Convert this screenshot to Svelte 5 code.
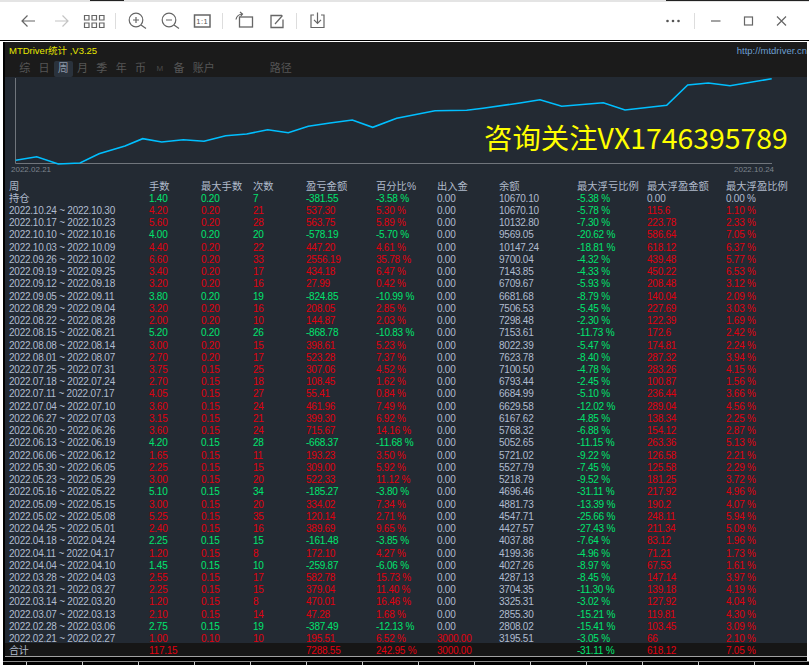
<script lang="ts">
  const columns = ['周', '手数', '最大手数', '次数', '盈亏金额', '百分比%', '出入金', '余额', '最大浮亏比例', '最大浮盈金额', '最大浮盈比例'];

  const raw = `持仓|1.40|0.20|7|-381.55|-3.58 %|0.00|10670.10|-5.38 %|0.00|0.00 %
2022.10.24 ~ 2022.10.30|4.20|0.20|21|537.30|5.30 %|0.00|10670.10|-5.78 %|115.6|1.10 %
2022.10.17 ~ 2022.10.23|5.60|0.20|28|563.75|5.89 %|0.00|10132.80|-7.30 %|223.78|2.33 %
2022.10.10 ~ 2022.10.16|4.00|0.20|20|-578.19|-5.70 %|0.00|9569.05|-20.62 %|586.64|7.05 %
2022.10.03 ~ 2022.10.09|4.40|0.20|22|447.20|4.61 %|0.00|10147.24|-18.81 %|618.12|6.37 %
2022.09.26 ~ 2022.10.02|6.60|0.20|33|2556.19|35.78 %|0.00|9700.04|-4.32 %|439.48|5.77 %
2022.09.19 ~ 2022.09.25|3.40|0.20|17|434.18|6.47 %|0.00|7143.85|-4.33 %|450.22|6.53 %
2022.09.12 ~ 2022.09.18|3.20|0.20|16|27.99|0.42 %|0.00|6709.67|-5.93 %|208.48|3.12 %
2022.09.05 ~ 2022.09.11|3.80|0.20|19|-824.85|-10.99 %|0.00|6681.68|-8.79 %|140.04|2.09 %
2022.08.29 ~ 2022.09.04|3.20|0.20|16|208.05|2.85 %|0.00|7506.53|-5.45 %|227.69|3.03 %
2022.08.22 ~ 2022.08.28|2.00|0.20|10|144.87|2.03 %|0.00|7298.48|-2.30 %|122.39|1.69 %
2022.08.15 ~ 2022.08.21|5.20|0.20|26|-868.78|-10.83 %|0.00|7153.61|-11.73 %|172.6|2.42 %
2022.08.08 ~ 2022.08.14|3.00|0.20|15|398.61|5.23 %|0.00|8022.39|-5.47 %|174.81|2.24 %
2022.08.01 ~ 2022.08.07|2.70|0.20|17|523.28|7.37 %|0.00|7623.78|-8.40 %|287.32|3.94 %
2022.07.25 ~ 2022.07.31|3.75|0.15|25|307.06|4.52 %|0.00|7100.50|-4.78 %|283.26|4.15 %
2022.07.18 ~ 2022.07.24|2.70|0.15|18|108.45|1.62 %|0.00|6793.44|-2.45 %|100.87|1.56 %
2022.07.11 ~ 2022.07.17|4.05|0.15|27|55.41|0.84 %|0.00|6684.99|-5.10 %|236.44|3.66 %
2022.07.04 ~ 2022.07.10|3.60|0.15|24|461.96|7.49 %|0.00|6629.58|-12.02 %|289.04|4.56 %
2022.06.27 ~ 2022.07.03|3.15|0.15|21|399.30|6.92 %|0.00|6167.62|-4.85 %|138.34|2.25 %
2022.06.20 ~ 2022.06.26|3.60|0.15|24|715.67|14.16 %|0.00|5768.32|-6.88 %|154.12|2.87 %
2022.06.13 ~ 2022.06.19|4.20|0.15|28|-668.37|-11.68 %|0.00|5052.65|-11.15 %|263.36|5.13 %
2022.06.06 ~ 2022.06.12|1.65|0.15|11|193.23|3.50 %|0.00|5721.02|-9.22 %|126.58|2.21 %
2022.05.30 ~ 2022.06.05|2.25|0.15|15|309.00|5.92 %|0.00|5527.79|-7.45 %|125.58|2.29 %
2022.05.23 ~ 2022.05.29|3.00|0.15|20|522.33|11.12 %|0.00|5218.79|-9.52 %|181.25|3.72 %
2022.05.16 ~ 2022.05.22|5.10|0.15|34|-185.27|-3.80 %|0.00|4696.46|-31.11 %|217.92|4.96 %
2022.05.09 ~ 2022.05.15|3.00|0.15|20|334.02|7.34 %|0.00|4881.73|-13.39 %|190.2|4.07 %
2022.05.02 ~ 2022.05.08|5.25|0.15|35|120.14|2.71 %|0.00|4547.71|-25.66 %|248.11|5.94 %
2022.04.25 ~ 2022.05.01|2.40|0.15|16|389.69|9.65 %|0.00|4427.57|-27.43 %|211.34|5.09 %
2022.04.18 ~ 2022.04.24|2.25|0.15|15|-161.48|-3.85 %|0.00|4037.88|-7.64 %|83.12|1.96 %
2022.04.11 ~ 2022.04.17|1.20|0.15|8|172.10|4.27 %|0.00|4199.36|-4.96 %|71.21|1.73 %
2022.04.04 ~ 2022.04.10|1.45|0.15|10|-259.87|-6.06 %|0.00|4027.26|-8.97 %|67.53|1.61 %
2022.03.28 ~ 2022.04.03|2.55|0.15|17|582.78|15.73 %|0.00|4287.13|-8.45 %|147.14|3.97 %
2022.03.21 ~ 2022.03.27|2.25|0.15|15|379.04|11.40 %|0.00|3704.35|-11.30 %|139.18|4.19 %
2022.03.14 ~ 2022.03.20|1.20|0.15|8|470.01|16.46 %|0.00|3325.31|-3.02 %|127.92|4.04 %
2022.03.07 ~ 2022.03.13|2.10|0.15|14|47.28|1.68 %|0.00|2855.30|-15.21 %|119.81|4.30 %
2022.02.28 ~ 2022.03.06|2.75|0.15|19|-387.49|-12.13 %|0.00|2808.02|-15.41 %|103.45|3.09 %
2022.02.21 ~ 2022.02.27|1.00|0.10|10|195.51|6.52 %|3000.00|3195.51|-3.05 %|66|2.10 %
合计|117.15|||7288.55|242.95 %|3000.00||-31.11 %|618.12|7.05 %`;

  const rows = raw.split('\n').map((l) => l.split('|'));

  // colour for a cell, by column: first five follow the row's profit sign
  function tone(row: string[], i: number) {
    if (i === 0 || i === 7) return 'plain';
    if (i >= 1 && i <= 5) return row[4].startsWith('-') ? 'up' : 'down';
    if (i === 6) return row[6] === '0.00' ? 'plain' : 'down';
    if (i === 8) return 'up';
    return row[i].startsWith('0.00') ? 'plain' : 'down';
  }

  const curve = '15.7,161.3 36.7,157.7 58.3,165 80,164 99,154.7 125,147 142.7,139.7 161.7,143 183.3,140.7 204,142.3 225.7,136.7 246.7,135 267.7,130.7 288.3,133.7 308.3,127.3 330,124 352.3,121 372.7,128.3 396.7,119.3 435,111.7 466.7,111.3 483,109.3 520,104 540,100.7 561.7,107.3 603.3,103.7 625,111 666.7,106.3 687.7,86 708.3,84 730,86.7 771.7,79.7';

  const tabs = ['综', '日', '周', '月', '季', '年', '币', 'M', '备'];
</script>

<div class="strip"><i class="bit a"></i><i class="bit b"></i></div>

<div class="toolbar">
  <span class="slot">
    <svg viewBox="0 0 33 24"><path d="M10 12h13M15.500 6.500 10 12l5.500 5.500" /></svg>
  </span>
  <span class="slot off">
    <svg viewBox="0 0 33 24"><path d="M10 12h13M17.500 6.500 23 12l-5.500 5.500" /></svg>
  </span>
  <span class="slot">
    <svg viewBox="0 0 33 24">
      <path d="M6.500 6.500h4.500v4.500h-4.500zM14 6.500h4.500v4.500H14zM21.500 6.500h4.500v4.500h-4.500zM6.500 14h4.500v4.500h-4.500zM14 14h4.500v4.500H14zM21.500 14h4.500v4.500h-4.500z" />
    </svg>
  </span>
  <i class="sep first"></i>
  <span class="slot">
    <svg viewBox="0 0 33 24"><circle cx="16" cy="11" r="6.800" /><path d="m21 16 5 3.500M13 11h6M16 8v6" /></svg>
  </span>
  <span class="slot">
    <svg viewBox="0 0 33 24"><circle cx="16" cy="11" r="6.800" /><path d="m21 16 5 3.500M13 11h6" /></svg>
  </span>
  <span class="slot">
    <svg viewBox="0 0 33 24">
      <rect x="8.500" y="6" width="15.500" height="12" stroke-width="1.500" />
      <text x="16.200" y="15" text-anchor="middle">1:1</text>
    </svg>
  </span>
  <i class="sep"></i>
  <span class="slot">
    <svg viewBox="0 0 33 24"><rect x="12.500" y="8" width="13" height="10" stroke-width="1.300" /><path d="M9 10.500c.5-3 2.500-5 6-5.500M13 3l2.500 2-2 2.500" /></svg>
  </span>
  <span class="slot">
    <svg viewBox="0 0 33 24"><path d="M22 6.500H11v12h12v-8" stroke-width="1.300" /><path d="m15 15 7.500-8.500" /></svg>
  </span>
  <i class="sep"></i>
  <span class="slot">
    <svg viewBox="0 0 33 24"><path d="M13 6h-3v12.500h13V6h-3M16.500 3.500V14M13 10.800l3.500 3.500 3.500-3.500" /></svg>
  </span>
  <span class="fill"></span>
  <span class="slot">
    <svg viewBox="0 0 33 24"><circle cx="10.500" cy="12" r="1.300" class="solid" /><circle cx="16" cy="12" r="1.300" class="solid" /><circle cx="21.500" cy="12" r="1.300" class="solid" /></svg>
  </span>
  <i class="sep win-sep"></i>
  <span class="slot">
    <svg viewBox="0 0 33 24"><path d="M12 12h9.500" /></svg>
  </span>
  <span class="slot">
    <svg viewBox="0 0 33 24"><rect x="12.500" y="8" width="8" height="8" /></svg>
  </span>
  <span class="slot">
    <svg viewBox="0 0 33 24"><path d="m12 7.500 9 9M21 7.500l-9 9" /></svg>
  </span>
</div>

<div class="app">
  <div class="head">
    <div class="title-row">
      <span class="title">MTDriver统计 ,V3.25</span>
      <span class="link">http://mtdriver.cn</span>
    </div>
    <div class="tabs">
      {#each tabs as t}
        <span class="tab" class:on={t === '周'} class:small={t === 'M'}>{t}</span>
      {/each}
      <span class="tab wide">账户</span>
      <span class="tab wide path">路径</span>
    </div>
  </div>

  <div class="body">
    <div class="chart">
      <svg width="804" height="102" viewBox="5 78 804 102">
        <path class="axis" d="M15.500 79v85.500H772" />
        <polyline class="line" points={curve} />
        <text x="11" y="173">2022.02.21</text>
        <text x="734" y="173">2022.10.24</text>
      </svg>
      <div class="mark">咨询关注VX1746395789</div>
    </div>

    <div class="table">
      <div class="row head-row">
        {#each columns as c}
          <span>{c}</span>
        {/each}
      </div>
      {#each rows as row, r}
        <div class="row" class:total={r === rows.length - 1}>
          {#each row as cell, i}
            <span class={tone(row, i)} class:big={r === 0 && i === 0}>{cell}</span>
          {/each}
        </div>
      {/each}
    </div>
  </div>

  <div class="foot"></div>
</div>
<div class="ticks"></div>

<style>
  :global(body) { margin: 0; background: #fff; overflow: hidden; }

  .strip { height: 2px; background: #e4e4e4; position: relative; }
  .bit   { position: absolute; top: 0; height: 1px; background: #222; }
  .bit.a { left: 90px; width: 34px; }
  .bit.b { left: 666px; width: 143px; }

  .toolbar { height: 39px; box-sizing: border-box; padding-left: 11.5px; display: flex; align-items: center;
             background: #fff; border-bottom: 1px solid #000; }
  .slot    { width: 33px; height: 24px; flex: none; }
  .slot svg { display: block; width: 33px; height: 24px; fill: none; stroke: #666; stroke-width: 1.2; }
  .slot.off svg { stroke: #c4c4c4; }
  .slot .solid { fill: #555; stroke: none; }
  .slot text { font: 7.500px "Liberation Sans", sans-serif; fill: #555; stroke: none; letter-spacing: 0.5px; }
  .sep     { width: 1px; height: 16px; background: #ddd; margin: 0 3.500px; flex: none; }
  .sep.first { margin: 0 3.500px 0 4.500px; }
  .sep.win-sep { margin: 0 4px; }
  .fill    { flex: 1; }
  .toolbar > .slot:last-child { margin-right: 11px; }

  .app  { margin: 1px 2px 0 3px; border-left: 2px solid #000; font-family: "Liberation Sans", "Noto Sans CJK SC", sans-serif; }

  .head { background: #1b1b1b; height: 35px; }
  .title-row { display: flex; justify-content: space-between; height: 19px; padding: 2px 0 0 4px; box-sizing: border-box; font-size: 9.500px; line-height: 13px; }
  .title { color: #e6e600; }
  .link  { color: #6b9fd0; }
  .tabs  { display: flex; padding-left: 10px; height: 16px; }
  .tab   { width: 19.300px; text-align: center; font-size: 11px; line-height: 15px; color: #565656; }
  .tab.on { background: #2a323c; color: #8d98a8; border-radius: 2px; }
  .tab.small { font-size: 8px; color: #4a4a4a; }
  .tab.wide { width: 26px; margin-left: 2px; }
  .tab.path { margin-left: 51px; }

  .body  { background: #232a33; }
  .chart { position: relative; height: 102px; }
  .chart svg { display: block; }
  .axis  { fill: none; stroke: #70757c; stroke-width: 1; }
  .line  { fill: none; stroke: #00bfff; stroke-width: 1.600; }
  .chart text { font-size: 8px; fill: #7d848e; font-family: "Liberation Sans", sans-serif; }
  .mark  { position: absolute; left: 479px; top: 42px; font-size: 28.400px; line-height: 36px; color: #ffff00;
           font-family: "Noto Sans CJK SC", "Noto Sans", sans-serif; white-space: nowrap; }

  .table { margin-top: 1.5px; }
  .row   { display: grid; grid-template-columns: 140px 52px 52px 53px 70px 61px 62px 78px 70px 79px 1fr;
           height: 12.240px; padding-left: 4px; font-size: 10px; letter-spacing: -0.24px; line-height: 12px; white-space: nowrap; }
  .head-row { color: #b0bacb; font-size: 10.300px; letter-spacing: 0; }
  .plain { color: #b0bccf; }
  .up    { color: #00e46e; }
  .down  { color: #e0000f; }
  .big   { font-size: 10.300px; letter-spacing: 0; }
  .total { background: #161616; height: 13px; margin-top: -2px; line-height: 16px; }

  .foot  { height: 4px; background: #000; border-top: 1px solid #a0a0a0; }
  .ticks { margin-left: 3px; height: 4px; background-color: #000;
           background-image: repeating-linear-gradient(90deg, transparent 0 23px, #ccc 23px 24px, transparent 24px 56px);
           border-top: 1px solid #888; box-sizing: border-box; }
</style>
